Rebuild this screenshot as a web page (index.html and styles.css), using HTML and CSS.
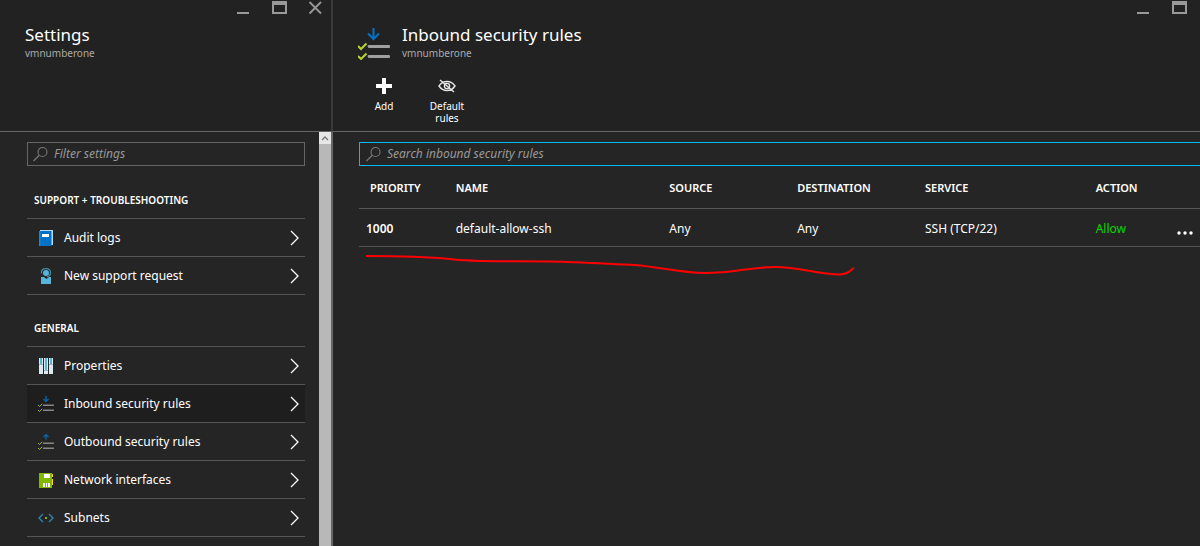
FILE: index.html
```html
<!DOCTYPE html>
<html lang="en">
<head>
<meta charset="utf-8">
<title>Inbound security rules</title>
<meta name="viewport" content="width=device-width, initial-scale=1">
<link rel="stylesheet" href="styles.css">
</head>
<body>
<svg class="defs" aria-hidden="true">
  <symbol id="minimize" viewBox="0 0 16 16"><path d="M2 12h12v2H2z" fill="currentColor"/></symbol>
  <symbol id="maximize" viewBox="0 0 16 16"><path fill-rule="evenodd" d="M1 1h15v13H1zM3 5v7h11V5z" fill="currentColor"/></symbol>
  <symbol id="close" viewBox="0 0 16 16"><path d="M2.500 2l11.500 11.500M14 2L2.500 13.500" stroke="currentColor" stroke-width="1.800"/></symbol>
  <symbol id="search" viewBox="0 0 16 16"><circle cx="9.500" cy="6" r="4.500" fill="none" stroke="currentColor" stroke-width="1.100"/><path d="M6.300 9.300L.5 15" stroke="currentColor" stroke-width="1.300"/></symbol>
  <symbol id="chevron" viewBox="0 0 10 16"><path d="M1 1l7 7-7 7" fill="none" stroke="currentColor" stroke-width="1.300"/></symbol>
  <symbol id="rules" viewBox="0 0 32 32"><path d="M11 18.500h20M11 28.500h20" stroke="#a0a0a0" stroke-width="2.800" stroke-linecap="round"/><path d="M0 18l3 3 5.500-5.500M0 28l3 3 5.500-5.500" fill="none" stroke="#b8d432" stroke-width="2"/></symbol>
</svg>
<div class="portal">
  <section class="blade settings" aria-label="Settings">
    <header class="blade-head">
      <div class="window-tools">
        <button type="button" aria-label="Minimize settings"><svg><use href="#minimize"/></svg></button>
        <button type="button" aria-label="Maximize settings"><svg><use href="#maximize"/></svg></button>
        <button type="button" aria-label="Close settings"><svg><use href="#close"/></svg></button>
      </div>
      <div class="heading"><div><h1>Settings</h1><p>vmnumberone</p></div></div>
    </header>
    <div class="settings-body">
      <div class="settings-content">
        <label class="search"><svg aria-hidden="true"><use href="#search"/></svg><input type="text" aria-label="Filter settings" placeholder="Filter settings"></label>
        <h2>SUPPORT + TROUBLESHOOTING</h2>
        <ul>
          <li><a href="#audit"><svg class="item-icon" viewBox="0 0 16 16"><path d="M2 0h13v15H2z" fill="#b9d9ef"/><path d="M1 1h12.500v15H1z" fill="#0072c6"/><path d="M1 1h1.500v15H1z" fill="#1689d8"/><path d="M4 4h7v3H4z" fill="#fff"/></svg><span>Audit logs</span><svg class="chevron"><use href="#chevron"/></svg></a></li>
          <li><a href="#support"><svg class="item-icon" viewBox="0 0 16 16"><path d="M3 9h3l2.500 2L11 9h2v7H3z" fill="#59b4d9"/><circle cx="8" cy="5" r="3" fill="#59b4d9"/><path d="M3.500 5.500C3 2 5 .7 8 .7s5 1.500 4.500 5c-.5 2-2 3-4 3.200" fill="none" stroke="#408ba8" stroke-width="1.300"/><circle cx="8" cy="9" r="1" fill="#252525"/></svg><span>New support request</span><svg class="chevron"><use href="#chevron"/></svg></a></li>
        </ul>
        <h2>GENERAL</h2>
        <ul>
          <li><a href="#properties"><svg class="item-icon" viewBox="0 0 16 16"><path d="M1 0h4v16H1zM6 0h4v16H6zM11 0h4v16h-4z" fill="#dce9f0"/><path d="M2 0h2v6H2zM7 0h2v12H7zM12 0h2v6h-2z" fill="#59b4d9"/><path d="M1 6h4v1H1zM6 12h4v1H6zM11 6h4v1h-4z" fill="#9fb2bd"/></svg><span>Properties</span><svg class="chevron"><use href="#chevron"/></svg></a></li>
          <li class="selected"><a href="#inbound" aria-current="page"><svg class="item-icon dim" viewBox="0 0 32 32"><use href="#rules"/><path d="M16 0v10M11 6l5 5 5-5" fill="none" stroke="#0072c6" stroke-width="3"/></svg><span>Inbound security rules</span><svg class="chevron"><use href="#chevron"/></svg></a></li>
          <li><a href="#outbound"><svg class="item-icon dim" viewBox="0 0 32 32"><use href="#rules"/><path d="M16 11V1M11 6l5-5 5 5" fill="none" stroke="#0072c6" stroke-width="3"/></svg><span>Outbound security rules</span><svg class="chevron"><use href="#chevron"/></svg></a></li>
          <li><a href="#network"><svg class="item-icon" viewBox="0 0 16 16"><path d="M13 2h2v3h-2zM13 7h2v6h-2z" fill="#fcd116"/><path d="M1 1h13v15H1z" fill="#7fba00"/><path d="M6 2h6v4H6zM5 11h2v4H5zM8 11h1v4H8zM10 11h2v4h-2z" fill="#fff"/></svg><span>Network interfaces</span><svg class="chevron"><use href="#chevron"/></svg></a></li>
          <li><a href="#subnets"><svg class="item-icon" viewBox="0 0 16 16"><path d="M5 4L1 8l4 4M11 4l4 4-4 4" fill="none" stroke="#3186b5" stroke-width="1.300"/><path d="M7 7h2v2H7z" fill="#7fba00"/></svg><span>Subnets</span><svg class="chevron"><use href="#chevron"/></svg></a></li>
        </ul>
      </div>
      <div class="scroll-track"><button type="button" aria-label="Scroll up"><svg viewBox="0 0 12 12"><path d="M3 8l3-3 3 3" fill="none" stroke="#777" stroke-width="1.300"/></svg></button></div>
    </div>
  </section>
  <main class="blade rules">
    <header class="blade-head">
      <div class="window-tools">
        <button type="button" aria-label="Minimize rules"><svg><use href="#minimize"/></svg></button>
        <button type="button" aria-label="Maximize rules"><svg><use href="#maximize"/></svg></button>
      </div>
      <div class="heading">
        <svg class="title-icon" viewBox="0 0 32 32" aria-hidden="true"><use href="#rules"/><path d="M15.500 0v10M10 5.500l5.500 5.500L21 5.500" fill="none" stroke="#0072c6" stroke-width="2"/></svg>
        <div><h1>Inbound security rules</h1><p>vmnumberone</p></div>
      </div>
      <div class="commands">
        <button type="button"><svg viewBox="0 0 18 18"><path d="M7 1h4v6h6v4h-6v6H7v-6H1V7h6z" fill="#fff"/></svg>Add</button>
        <button type="button"><svg viewBox="0 0 18 18"><path d="M1 9c4-6 12-6 16 0-4 6-12 6-16 0zM2 3l14 12" fill="none" stroke="#e5e5e5" stroke-width="1.400"/><circle cx="9" cy="9" r="2.600" fill="none" stroke="#e5e5e5" stroke-width="1.400"/></svg>Default rules</button>
      </div>
    </header>
    <div class="rules-body">
      <label class="search active"><svg aria-hidden="true"><use href="#search"/></svg><input type="text" aria-label="Search inbound security rules" placeholder="Search inbound security rules"></label>
      <table>
        <colgroup><col class="c-priority"><col class="c-name"><col class="c-source"><col class="c-destination"><col class="c-service"><col class="c-action"><col></colgroup>
        <thead><tr><th scope="col">PRIORITY</th><th scope="col">NAME</th><th scope="col">SOURCE</th><th scope="col">DESTINATION</th><th scope="col">SERVICE</th><th scope="col">ACTION</th><td></td></tr></thead>
        <tbody><tr><th scope="row">1000</th><td>default-allow-ssh</td><td>Any</td><td>Any</td><td>SSH (TCP/22)</td><td class="allow">Allow</td><td><button class="more" type="button" aria-label="More actions"><svg viewBox="0 0 16 4"><g fill="#fff"><circle cx="2" cy="2" r="1.700"/><circle cx="8" cy="2" r="1.700"/><circle cx="14" cy="2" r="1.700"/></g></svg></button></td></tr></tbody>
      </table>
      <svg class="underline" viewBox="366 250 490 28" aria-hidden="true"><path d="M366 256C400 256 430 257 450 259C470 262 500 261 550 261.500C580 262 610 264 635 265C660 267 680 273 705 273C735 273 750 267 775 267C800 267 820 275 840 274.500C850 274 850 270 854 268" fill="none" stroke="#f00" stroke-width="2"/></svg>
    </div>
  </main>
</div>
</body>
</html>
```
FILE: styles.css
```css
* { box-sizing: border-box; }
body { margin: 0; background: #252525; color: #fff; font: 12px/16px "Noto Sans", "Open Sans", sans-serif; }
h1, h2, p, ul { margin: 0; padding: 0; font-weight: 400; }
ul { list-style: none; }
button { border: 0; padding: 0; background: none; color: inherit; font: inherit; cursor: pointer; }
svg { display: block; flex: none; }
.defs { position: absolute; width: 0; height: 0; }

.portal { display: grid; grid-template-columns: 333px minmax(0, 1fr); min-height: 100vh; }
.blade { display: flex; flex-direction: column; min-width: 0; }
.blade-head { height: 132px; background: #222; border-bottom: 1px solid #666; }
.settings .blade-head { border-right: 2px solid #3a3a3a; }
.window-tools { display: flex; justify-content: flex-end; gap: 20px; height: 24px; padding-right: 8px; color: #999; }
.rules .window-tools { padding-right: 13px; }
.window-tools svg { width: 16px; height: 16px; }
.window-tools button { height: 16px; }
.heading { display: flex; gap: 12px; padding-left: 25px; }
h1 { font-size: 17px; line-height: 22px; }
.heading p { font-size: 10px; line-height: 14px; color: #aaa; }
.title-icon { width: 32px; height: 32px; margin-top: 4px; }
.commands { display: flex; gap: 15px; padding: 17px 0 0 27px; }
.commands button { display: flex; flex-direction: column; align-items: center; width: 48px; font-size: 10px; line-height: 12px; }
.commands svg { width: 18px; height: 18px; margin-bottom: 5px; }

.settings-body { display: flex; flex: 1; border-right: 2px solid #666; }
.settings-content { flex: 1; padding: 10px 14px 0 27px; }
.search { display: flex; align-items: center; height: 24px; padding-left: 5px; gap: 5px; border: 1px solid #666; color: #777; }
.settings .search { margin-bottom: 1px; }
.search svg { width: 16px; height: 16px; }
.search input { flex: 1; min-width: 0; border: 0; padding: 0; outline: 0; background: none; color: #fff; font: italic 12px/16px "Noto Sans", "Open Sans", sans-serif; }
.search input::placeholder { color: #999; opacity: 1; }
.search.active { border-color: #00bcf2; border-right: 0; padding-left: 6px; }

h2 { padding: 25px 7px 10px; font-size: 10px; line-height: 16px; font-weight: 600; }
ul { border-top: 1px solid #555; }
li a { display: flex; align-items: center; height: 38px; padding: 0 5px 0 11px; gap: 10px; border-bottom: 1px solid #555; color: inherit; text-decoration: none; }
li span { flex: 1; }
.selected { background: #1e1e1e; }
.item-icon { width: 16px; height: 16px; }
.dim { opacity: .8; }
.chevron { width: 10px; height: 16px; }
.scroll-track { width: 12px; background: #b8b8b8; }
.scroll-track button { display: block; width: 12px; height: 12px; background: #e6e6e6; }

.rules-body { padding: 10px 0 0 26px; }
table { width: 100%; table-layout: fixed; border-collapse: separate; border-spacing: 0; }
th, td { padding: 2px 0 0; text-align: left; border-bottom: 1px solid #555; }
thead th { height: 43px; font-size: 11px; font-weight: 600; }
thead th:first-child { padding-left: 11px; }
tbody th { padding-left: 7px; font-weight: 600; }
tbody td, tbody th { height: 38px; }
.c-priority { width: 11.5%; }
.c-name { width: 25.4%; }
.c-source, .c-destination { width: 15.2%; }
.c-service { width: 20.3%; }
.c-action { width: 9.7%; }
.allow { color: #00d800; }
.more { display: block; padding-top: 8px; }
.more svg { width: 16px; height: 4px; }
.underline { width: 490px; height: 28px; margin: 3px 0 0 7px; }
```
